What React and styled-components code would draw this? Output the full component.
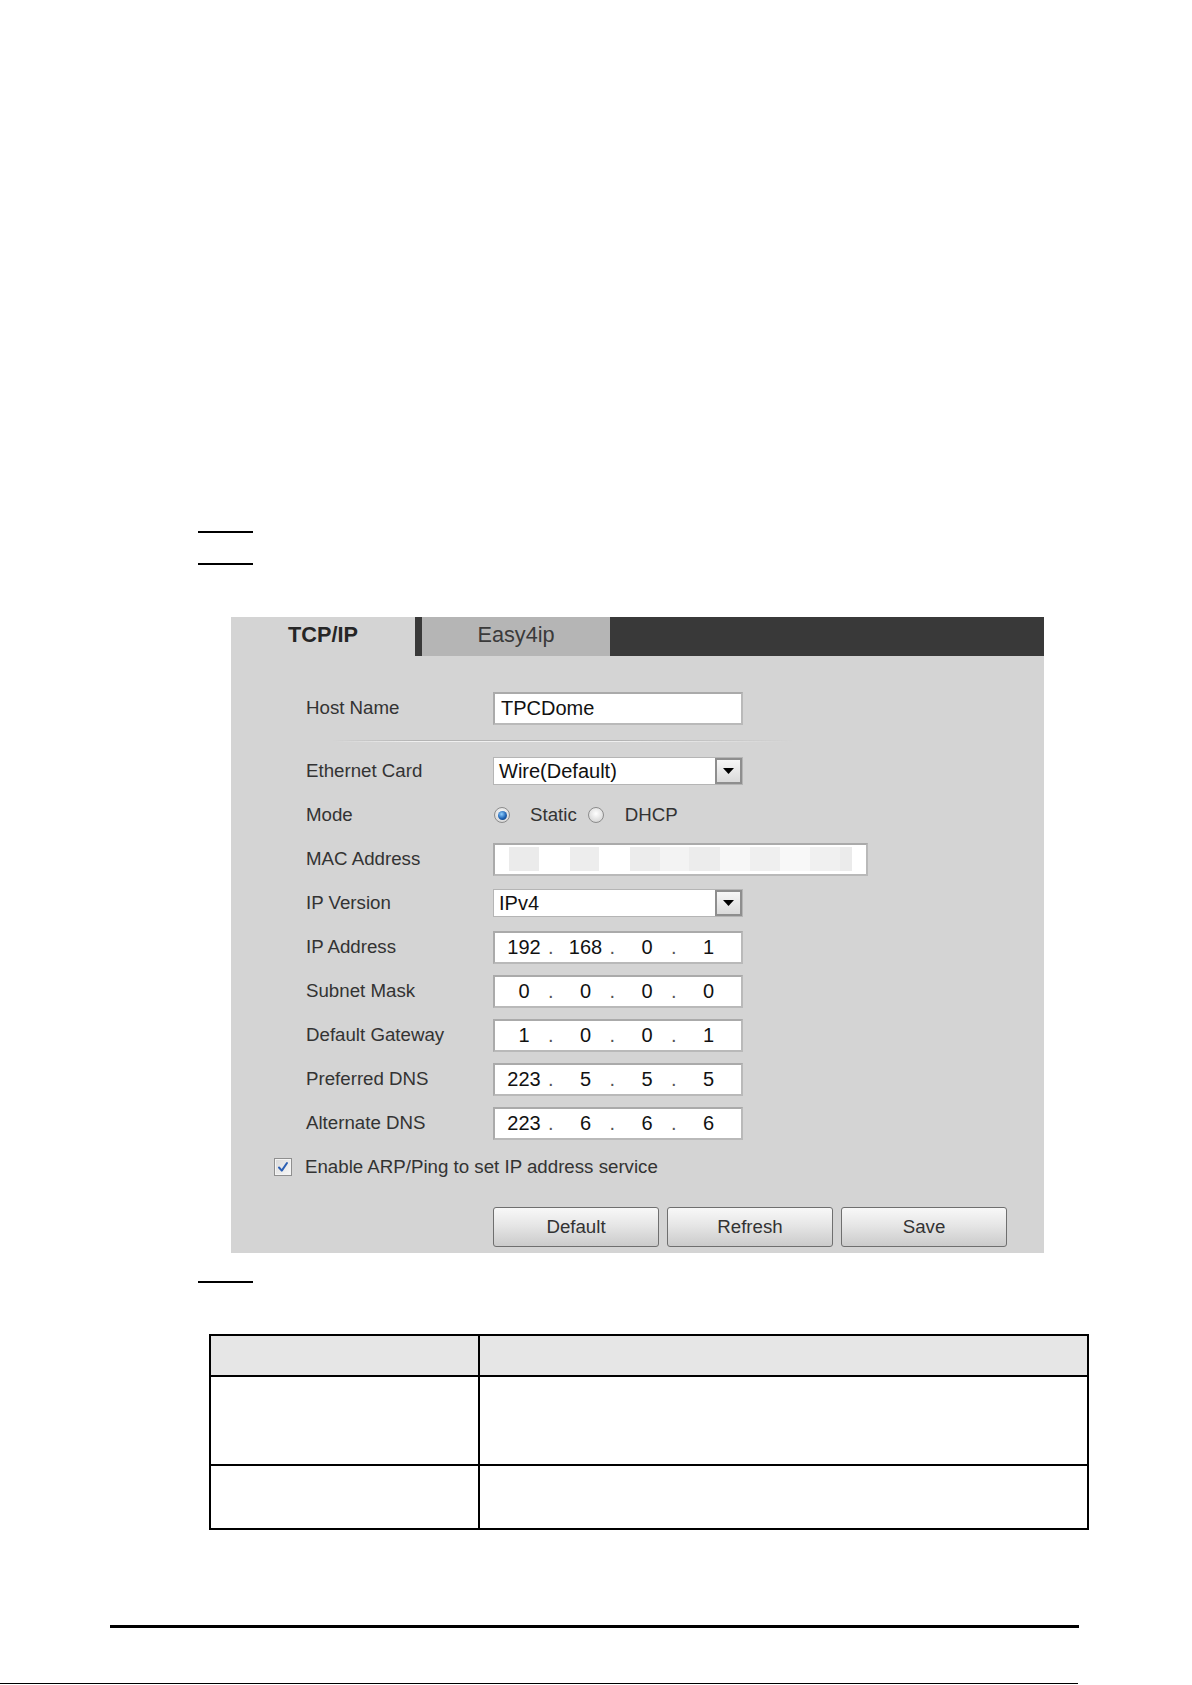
import React from "react";
import styled, { createGlobalStyle } from "styled-components";

const Global = createGlobalStyle`
  html, body { margin: 0; padding: 0; background: #fff; }
  body { font-family: "Liberation Sans", Arial, sans-serif; }
  * { box-sizing: border-box; }
`;

const Doc = styled.div`
  width: 1192px;
  height: 1685px;
  overflow: hidden;
  display: flex;
  flex-direction: column;
  padding-top: 531px;
`;

const StepRule = styled.div`
  flex: none;
  margin-top: ${(p) => p.$gap || 0}px;
  margin-left: 198px;
  width: 55px;
  height: 1.5px;
  background: #000;
`;

const Panel = styled.section`
  flex: none;
  margin: 52.5px 0 0 231px;
  width: 813px;
  height: 636px;
  background: #d4d4d4;
  display: flex;
  flex-direction: column;
`;

const TabBar = styled.div`
  display: flex;
  height: 39px;
  background: #393939;
`;

const Tab = styled.div`
  width: ${(p) => p.$w}px;
  margin-right: ${(p) => (p.$active ? 7 : 0)}px;
  display: flex;
  align-items: center;
  justify-content: center;
  padding-bottom: 4px;
  font-size: 21.7px;
  font-weight: ${(p) => (p.$active ? 700 : 400)};
  color: ${(p) => (p.$active ? "#262626" : "#3a3a3a")};
  background: ${(p) => (p.$active ? "#d4d4d4" : "#b5b5b5")};
`;

const FormBody = styled.div`
  display: flex;
  flex-direction: column;
  padding-top: 30px;
`;

const Row = styled.div`
  display: flex;
  align-items: center;
  height: 44px;
  padding-left: ${(p) => (p.$indent != null ? p.$indent : 75)}px;
`;

const Label = styled.div`
  flex: none;
  width: 187px;
  font-size: 18.7px;
  color: #333;
`;

const Divider = styled.div`
  height: 19px;
  padding: 10px 0 0 102px;
`;

const DividerLine = styled.div`
  width: 460px;
  height: 2px;
  background: linear-gradient(to bottom, #b4b4b4 0 1px, #efefef 1px 2px);
  -webkit-mask-image: linear-gradient(to right, transparent, #000 18%, #000 62%, transparent);
  mask-image: linear-gradient(to right, transparent, #000 18%, #000 62%, transparent);
`;

const TextInput = styled.input`
  width: ${(p) => p.$w || 250}px;
  height: 33px;
  margin: 0;
  padding: 0 0 0 6px;
  border: 2px solid #b9b9b9;
  border-top-color: #aaaaaa;
  border-left-color: #aaaaaa;
  background: #fff;
  font-family: "Liberation Sans", Arial, sans-serif;
  font-size: 20px;
  color: #111;
  outline: none;
`;

const SelectBox = styled.div`
  display: flex;
  width: 250px;
  height: 28px;
  background: #fff;
  border: 1px solid #b5b5b5;
`;

const SelectValue = styled.div`
  flex: 1;
  display: flex;
  align-items: center;
  padding-left: 5px;
  font-size: 20px;
  color: #111;
`;

const SelectButton = styled.div`
  flex: none;
  width: 27px;
  display: flex;
  align-items: center;
  justify-content: center;
  border: 2px solid #8e8e8e;
  background: linear-gradient(#f7f7f7, #dadada);
`;

const RadioGroup = styled.div`
  display: flex;
  align-items: center;
  padding-left: 1px;
`;

const Radio = styled.span`
  flex: none;
  width: 16px;
  height: 16px;
  border-radius: 50%;
  border: 1px solid #8c8c8c;
  background: radial-gradient(circle at 50% 40%, #ffffff, #d6d6d6 80%);
  display: flex;
  align-items: center;
  justify-content: center;
  margin-right: ${(p) => p.$gap}px;
  &::after {
    content: "";
    display: ${(p) => (p.$on ? "block" : "none")};
    width: 9px;
    height: 9px;
    border-radius: 50%;
    background: radial-gradient(circle at 40% 35%, #8fcfff, #1f63b4 55%, #0c3468);
  }
`;

const RadioText = styled.span`
  font-size: 18.7px;
  color: #333;
  margin-right: ${(p) => p.$gap || 0}px;
`;

const MacBox = styled.div`
  display: flex;
  align-items: center;
  width: 375px;
  height: 33px;
  padding-left: 14px;
  background: #fff;
  border: 2px solid #b9b9b9;
  border-top-color: #aaaaaa;
  border-left-color: #aaaaaa;
`;

const MacCell = styled.span`
  flex: none;
  width: ${(p) => p.$w}px;
  height: 24px;
  background: ${(p) => p.$c};
`;

const IpBox = styled.div`
  display: flex;
  width: 250px;
  height: 33px;
  background: #fff;
  border: 2px solid #b9b9b9;
  border-top-color: #aaaaaa;
  border-left-color: #aaaaaa;
`;

const Octet = styled.div`
  flex: 1;
  display: flex;
  align-items: center;
`;

const OctetNum = styled.span`
  width: 48px;
  margin-left: 5px;
  text-align: center;
  font-size: 20px;
  color: #111;
`;

const OctetDot = styled.span`
  font-size: 20px;
  color: #555;
`;

const Check = styled.span`
  flex: none;
  width: 18px;
  height: 18px;
  margin-right: 13px;
  border: 1px solid #8f8f8f;
  background: linear-gradient(135deg, #d9d9d9, #f8f8f8);
  box-shadow: inset 0 0 0 1px #f4f4f4;
  display: flex;
  align-items: center;
  justify-content: center;
`;

const CheckText = styled.span`
  font-size: 18.7px;
  color: #333;
`;

const ButtonRow = styled.div`
  display: flex;
  gap: 8px;
  margin-top: 18px;
  padding-left: 262px;
`;

const Button = styled.button`
  width: 166px;
  height: 40px;
  margin: 0;
  padding: 0;
  border: 1px solid #6f6f6f;
  border-radius: 3px;
  background: linear-gradient(#f8f8f8, #e6e6e6 45%, #cbcbcb);
  font-family: "Liberation Sans", Arial, sans-serif;
  font-size: 18.7px;
  color: #333;
`;

const TableWrap = styled.div`
  flex: none;
  margin: 51.5px 0 0 209px;
  width: 880px;
  height: 195px;
`;

const SpecTable = styled.table`
  width: 880px;
  border-collapse: collapse;
  table-layout: fixed;
  th, td {
    border: 2px solid #000;
    padding: 0;
  }
  th { background: #e6e6e6; }
`;

const TableRow = styled.tr`
  height: ${(p) => p.$h}px;
`;

const FooterRule = styled.div`
  flex: none;
  margin: 96px 0 0 110px;
  width: 969px;
  height: 2.5px;
  background: #000;
`;

const BottomRule = styled.div`
  flex: none;
  margin-top: 55.5px;
  width: 1078px;
  height: 1px;
  background: #000;
`;

const Caret = () => (
  <svg width="11" height="6" viewBox="0 0 11 6">
    <path d="M0 0H11L5.5 6Z" fill="#000" />
  </svg>
);

const CheckMark = () => (
  <svg width="12" height="12" viewBox="0 0 12 12">
    <path d="M2 6.5L4.8 9.6L10 2" fill="none" stroke="#2b5fb4" strokeWidth="2" strokeLinecap="round" strokeLinejoin="round" />
  </svg>
);

const macCells = [
  [30, "#ebebeb"], [31, "#fff"], [29, "#ededed"], [31, "#fff"], [30, "#ececec"],
  [29, "#f3f3f3"], [31, "#ececec"], [30, "#f7f7f7"], [30, "#efefef"], [30, "#f8f8f8"],
  [30, "#f0f0f0"], [12, "#ebebeb"],
];

const ipRows = [
  ["IP Address", ["192", "168", "0", "1"]],
  ["Subnet Mask", ["0", "0", "0", "0"]],
  ["Default Gateway", ["1", "0", "0", "1"]],
  ["Preferred DNS", ["223", "5", "5", "5"]],
  ["Alternate DNS", ["223", "6", "6", "6"]],
];

const Select = ({ value }) => (
  <SelectBox>
    <SelectValue>{value}</SelectValue>
    <SelectButton>
      <Caret />
    </SelectButton>
  </SelectBox>
);

const IpField = ({ parts }) => (
  <IpBox>
    {parts.map((n, i) => (
      <Octet key={i}>
        <OctetNum>{n}</OctetNum>
        {i < 3 && <OctetDot>.</OctetDot>}
      </Octet>
    ))}
  </IpBox>
);

export default function App() {
  return (
    <>
      <Global />
      <Doc>
        <StepRule />
        <StepRule $gap={30.5} />
        <Panel>
          <TabBar>
            <Tab $active $w={184}>TCP/IP</Tab>
            <Tab $w={188}>Easy4ip</Tab>
          </TabBar>
          <FormBody>
            <Row>
              <Label>Host Name</Label>
              <TextInput readOnly defaultValue="TPCDome" />
            </Row>
            <Divider>
              <DividerLine />
            </Divider>
            <Row>
              <Label>Ethernet Card</Label>
              <Select value="Wire(Default)" />
            </Row>
            <Row>
              <Label>Mode</Label>
              <RadioGroup>
                <Radio $on $gap={20} />
                <RadioText $gap={11}>Static</RadioText>
                <Radio $gap={21} />
                <RadioText>DHCP</RadioText>
              </RadioGroup>
            </Row>
            <Row>
              <Label>MAC Address</Label>
              <MacBox>
                {macCells.map(([w, c], i) => (
                  <MacCell key={i} $w={w} $c={c} />
                ))}
              </MacBox>
            </Row>
            <Row>
              <Label>IP Version</Label>
              <Select value="IPv4" />
            </Row>
            {ipRows.map(([label, parts]) => (
              <Row key={label}>
                <Label>{label}</Label>
                <IpField parts={parts} />
              </Row>
            ))}
            <Row $indent={43}>
              <Check>
                <CheckMark />
              </Check>
              <CheckText>Enable ARP/Ping to set IP address service</CheckText>
            </Row>
            <ButtonRow>
              <Button>Default</Button>
              <Button>Refresh</Button>
              <Button>Save</Button>
            </ButtonRow>
          </FormBody>
        </Panel>
        <StepRule $gap={28} />
        <TableWrap>
          <SpecTable>
            <colgroup>
              <col style={{ width: 269 }} />
              <col />
            </colgroup>
            <thead>
              <TableRow $h={41}>
                <th />
                <th />
              </TableRow>
            </thead>
            <tbody>
              <TableRow $h={89}>
                <td />
                <td />
              </TableRow>
              <TableRow $h={64}>
                <td />
                <td />
              </TableRow>
            </tbody>
          </SpecTable>
        </TableWrap>
        <FooterRule />
        <BottomRule />
      </Doc>
    </>
  );
}
